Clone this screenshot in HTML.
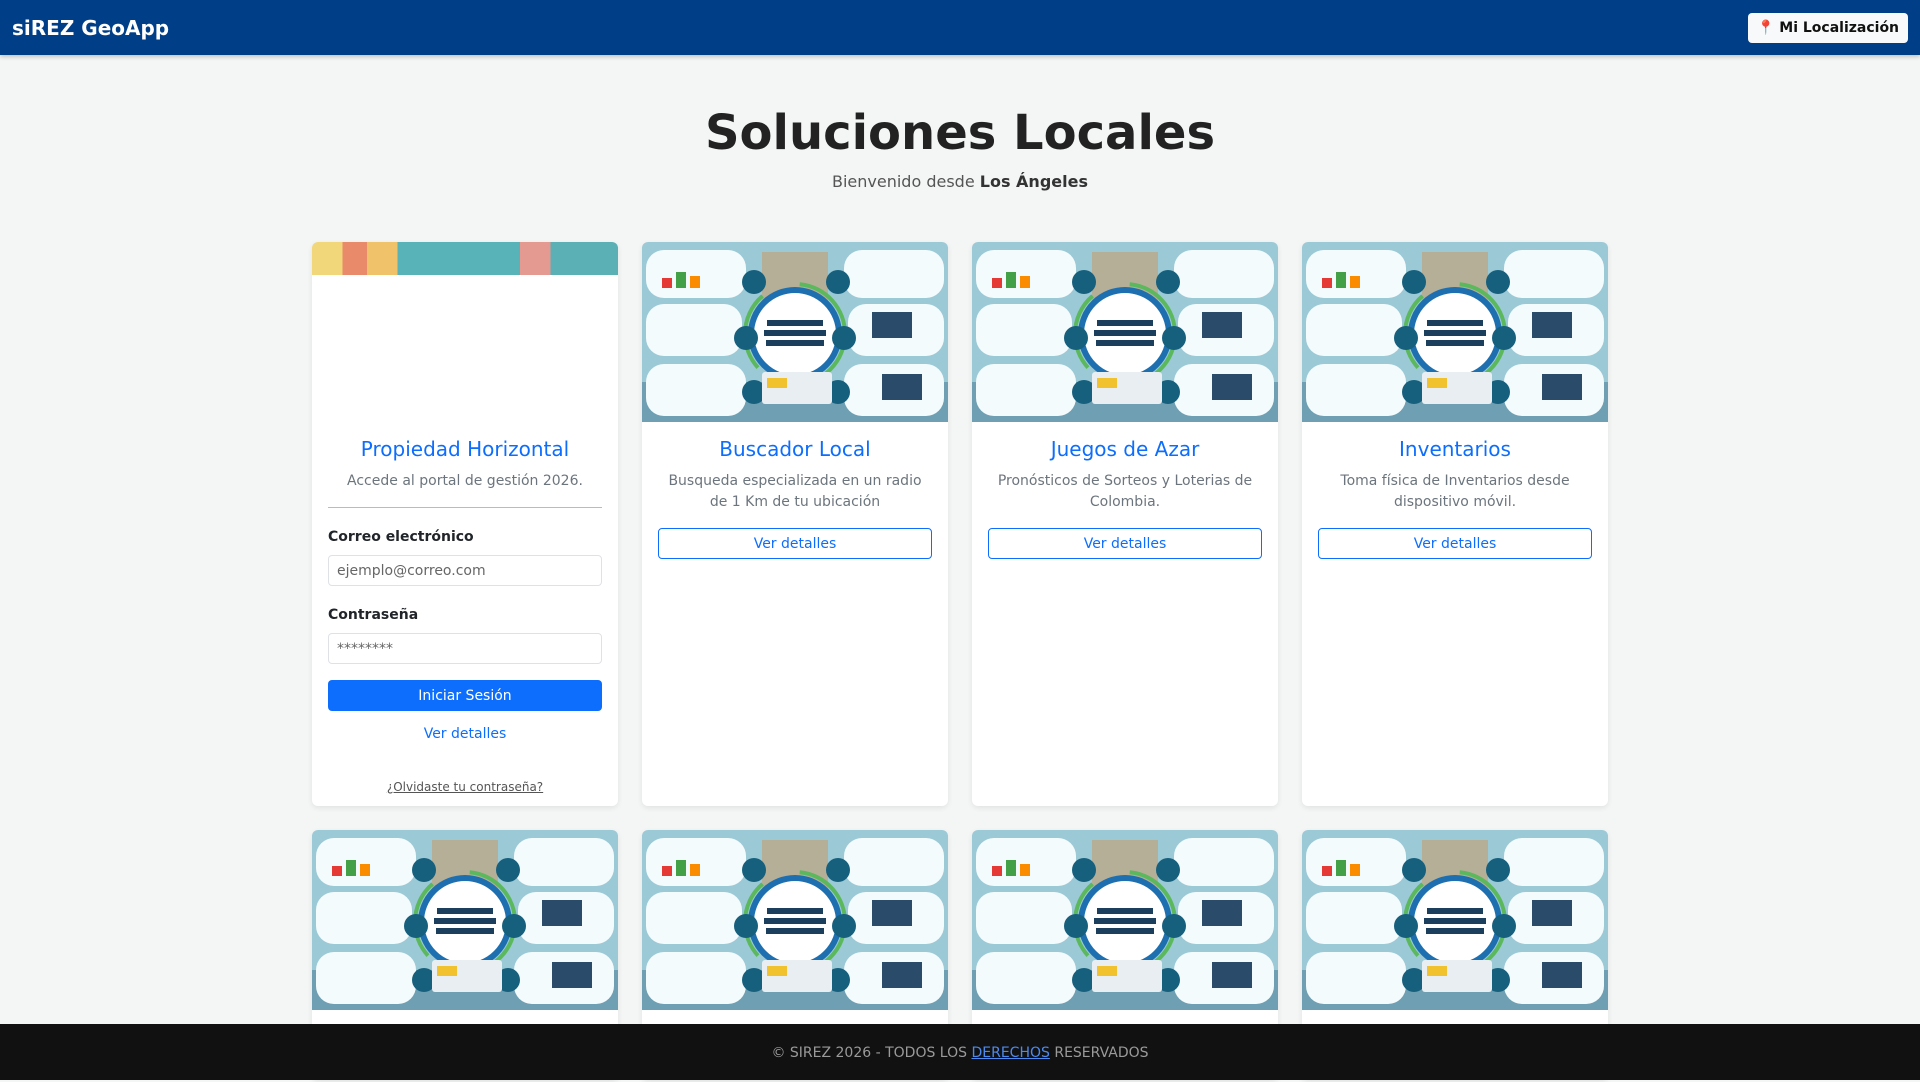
<!DOCTYPE html>
<html><head><meta charset="utf-8">
<style>
*{box-sizing:border-box;margin:0;padding:0}
body{width:1920px;height:1080px;overflow:hidden;background:#f4f6f6;font-family:"DejaVu Sans","Liberation Sans",sans-serif;color:#212529;position:relative}
.nav{position:absolute;left:0;top:0;width:1920px;height:55px;background:#003f87;box-shadow:0 2px 4px rgba(0,0,0,.2)}
.brand{position:absolute;left:12px;top:16px;color:#fff;font-weight:bold;font-size:20px}
.loc{position:absolute;left:1748px;top:13px;width:160px;height:30px;background:#f8f9fa;border-radius:4px;font-weight:bold;font-size:14px;line-height:30px;text-align:center;color:#111}
h1{position:absolute;left:0;width:1920px;top:105px;text-align:center;font-size:48px;font-weight:bold;color:#222}
.sub{position:absolute;left:0;width:1920px;top:172px;text-align:center;font-size:16px;color:#555}
.sub b{color:#333}
.card{position:absolute;width:306px;background:#fff;border-radius:6px;box-shadow:0 2px 6px rgba(0,0,0,.08);overflow:hidden}
.card svg{display:block}
.t{position:absolute;left:0;width:306px;text-align:center;color:#0d6efd;font-size:20px}
.d{position:absolute;left:20px;width:266px;text-align:center;color:#6c757d;font-size:14px;line-height:21px}
.ob{position:absolute;left:16px;width:274px;height:31px;border:1px solid #0d6efd;border-radius:4px;color:#0d6efd;font-size:14px;text-align:center;line-height:30px}
.lab{position:absolute;left:16px;font-weight:bold;font-size:14px}
.inp{position:absolute;left:16px;width:274px;height:31px;border:1px solid #dee2e6;border-radius:4px;font-size:14px;color:#666;padding-left:8px;line-height:30px}
.foot{position:absolute;left:0;top:1024px;width:1920px;height:56px;background:#111;color:#9a9a9a;font-size:14px;text-align:center;line-height:58px}
.foot u{color:#4d8af0}
</style></head><body>
<svg width="0" height="0" style="position:absolute">
<defs>
<symbol id="inv" viewBox="0 0 306 180">
<rect width="306" height="180" fill="#9cc9d6"/>
<rect y="140" width="306" height="40" fill="#6e9fb2"/>
<rect x="120" y="10" width="66" height="60" fill="#c89f6c" opacity=".6"/>
<rect x="4" y="8" width="100" height="48" rx="18" fill="#f4fbfd"/>
<rect x="4" y="62" width="96" height="52" rx="18" fill="#f4fbfd"/>
<rect x="4" y="122" width="100" height="52" rx="18" fill="#f4fbfd"/>
<rect x="202" y="8" width="100" height="48" rx="18" fill="#f4fbfd"/>
<rect x="206" y="62" width="96" height="52" rx="18" fill="#f4fbfd"/>
<rect x="202" y="122" width="100" height="52" rx="18" fill="#f4fbfd"/>
<rect x="20" y="36" width="10" height="10" fill="#e53935"/><rect x="34" y="30" width="10" height="16" fill="#43a047"/><rect x="48" y="34" width="10" height="12" fill="#fb8c00"/>
<circle cx="153" cy="92" r="44" fill="#fff" stroke="#1e6fb0" stroke-width="6"/>
<circle cx="153" cy="92" r="50" fill="none" stroke="#5bb85d" stroke-width="4" stroke-dasharray="80 40"/>
<rect x="125" y="78" width="56" height="6" fill="#1d3f5e"/><rect x="122" y="88" width="62" height="6" fill="#1d3f5e"/><rect x="124" y="98" width="58" height="6" fill="#1d3f5e"/>
<g fill="#17607d"><circle cx="112" cy="40" r="12"/><circle cx="196" cy="40" r="12"/><circle cx="104" cy="96" r="12"/><circle cx="202" cy="96" r="12"/><circle cx="112" cy="150" r="12"/><circle cx="196" cy="150" r="12"/></g>
<rect x="120" y="130" width="70" height="32" rx="3" fill="#e8eef2"/><rect x="125" y="136" width="20" height="10" fill="#f2c12e"/>
<rect x="240" y="132" width="40" height="26" fill="#2b4b6b"/><rect x="230" y="70" width="40" height="26" fill="#2b4b6b"/>
</symbol>
</defs></svg>
<div class="nav"><div class="brand">siREZ GeoApp</div><div class="loc">📍 Mi Localización</div></div>
<h1>Soluciones Locales</h1>
<div class="sub">Bienvenido desde <b>Los Ángeles</b></div>

<div class="card" style="left:312px;top:242px;height:564px">
<div style="height:33px;background:linear-gradient(90deg,#f2d77a 0 10%,#e98a6a 10% 18%,#f0c36a 18% 28%,#58b3b8 28% 68%,#e49a90 68% 78%,#5ab0b5 78%)"></div>
<div class="t" style="top:195px">Propiedad Horizontal</div>
<div class="d" style="top:229px">Accede al portal de gestión 2026.</div>
<div style="position:absolute;left:16px;top:265px;width:274px;border-top:1px solid #bbb"></div>
<div class="lab" style="top:287px">Correo electrónico</div>
<div class="inp" style="top:313px">ejemplo@correo.com</div>
<div class="lab" style="top:365px">Contraseña</div>
<div class="inp" style="top:391px">********</div>
<div style="position:absolute;left:16px;top:438px;width:274px;height:31px;background:#0d6efd;border-radius:4px;color:#fff;font-size:14px;text-align:center;line-height:32px">Iniciar Sesión</div>
<div style="position:absolute;left:0;width:306px;top:484px;text-align:center;color:#0d6efd;font-size:14px">Ver detalles</div>
<div style="position:absolute;left:0;width:306px;top:538px;text-align:center;color:#555;font-size:12px;text-decoration:underline">¿Olvidaste tu contraseña?</div>
</div>

<div class="card" style="left:642px;top:242px;height:564px"><svg width="306" height="180"><use href="#inv"/></svg>
<div class="t" style="top:195px">Buscador Local</div>
<div class="d" style="top:229px">Busqueda especializada en un radio de 1 Km de tu ubicación</div>
<div class="ob" style="top:286px">Ver detalles</div></div>

<div class="card" style="left:972px;top:242px;height:564px"><svg width="306" height="180"><use href="#inv"/></svg>
<div class="t" style="top:195px">Juegos de Azar</div>
<div class="d" style="top:229px">Pronósticos de Sorteos y Loterias de Colombia.</div>
<div class="ob" style="top:286px">Ver detalles</div></div>

<div class="card" style="left:1302px;top:242px;height:564px"><svg width="306" height="180"><use href="#inv"/></svg>
<div class="t" style="top:195px">Inventarios</div>
<div class="d" style="top:229px">Toma física de Inventarios desde dispositivo móvil.</div>
<div class="ob" style="top:286px">Ver detalles</div></div>

<div class="card" style="left:312px;top:830px;height:250px"><svg width="306" height="180"><use href="#inv"/></svg></div>
<div class="card" style="left:642px;top:830px;height:250px"><svg width="306" height="180"><use href="#inv"/></svg></div>
<div class="card" style="left:972px;top:830px;height:250px"><svg width="306" height="180"><use href="#inv"/></svg></div>
<div class="card" style="left:1302px;top:830px;height:250px"><svg width="306" height="180"><use href="#inv"/></svg></div>

<div class="foot">© SIREZ 2026 - TODOS LOS <u>DERECHOS</u> RESERVADOS</div>
</body></html>
